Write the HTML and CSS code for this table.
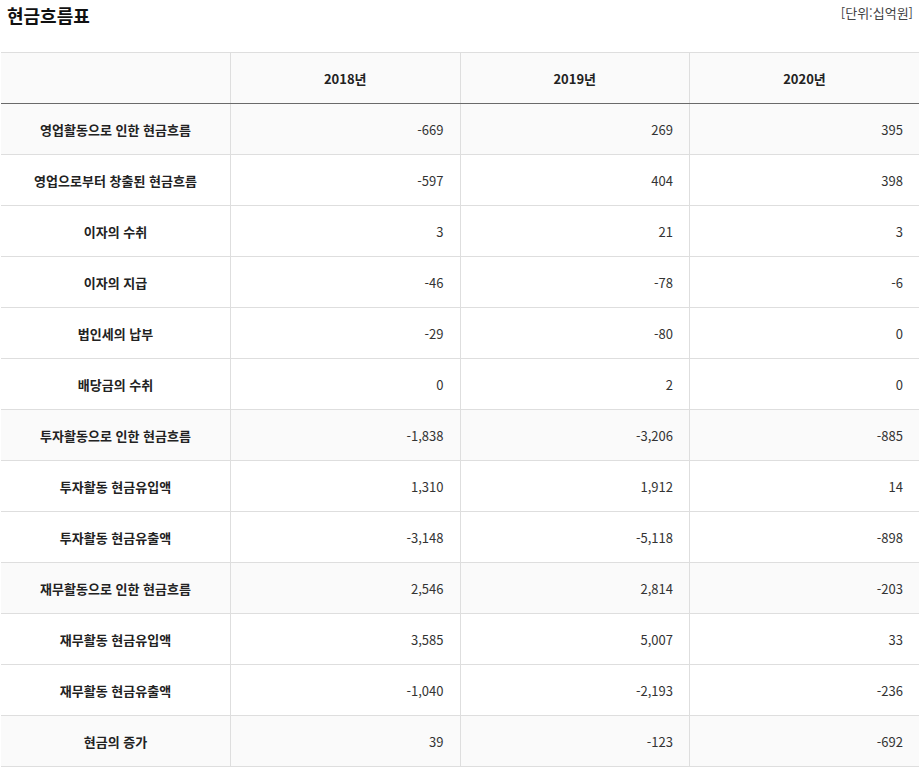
FILE: index.html
```html
<!DOCTYPE html>
<html lang="ko">
<head>
<meta charset="utf-8">
<link rel="stylesheet" href="styles.css">
</head>
<body>
<div class="page">
  <div class="head">
    <h2 class="title">현금흐름표</h2>
    <span class="unit">[단위:십억원]</span>
  </div>
  <table class="cf">
    <thead>
      <tr><th></th><th>2018년</th><th>2019년</th><th>2020년</th></tr>
    </thead>
    <tbody>
      <tr class="sub"><th>영업활동으로 인한 현금흐름</th><td>-669</td><td>269</td><td>395</td></tr>
      <tr><th>영업으로부터 창출된 현금흐름</th><td>-597</td><td>404</td><td>398</td></tr>
      <tr><th>이자의 수취</th><td>3</td><td>21</td><td>3</td></tr>
      <tr><th>이자의 지급</th><td>-46</td><td>-78</td><td>-6</td></tr>
      <tr><th>법인세의 납부</th><td>-29</td><td>-80</td><td>0</td></tr>
      <tr><th>배당금의 수취</th><td>0</td><td>2</td><td>0</td></tr>
      <tr class="sub"><th>투자활동으로 인한 현금흐름</th><td>-1,838</td><td>-3,206</td><td>-885</td></tr>
      <tr><th>투자활동 현금유입액</th><td>1,310</td><td>1,912</td><td>14</td></tr>
      <tr><th>투자활동 현금유출액</th><td>-3,148</td><td>-5,118</td><td>-898</td></tr>
      <tr class="sub"><th>재무활동으로 인한 현금흐름</th><td>2,546</td><td>2,814</td><td>-203</td></tr>
      <tr><th>재무활동 현금유입액</th><td>3,585</td><td>5,007</td><td>33</td></tr>
      <tr><th>재무활동 현금유출액</th><td>-1,040</td><td>-2,193</td><td>-236</td></tr>
      <tr class="sub"><th>현금의 증가</th><td>39</td><td>-123</td><td>-692</td></tr>
    </tbody>
  </table>
</div>
</body>
</html>
```

FILE: styles.css
```css
html, body {
  margin: 0;
  padding: 0;
  background: #fff;
}
body {
  font-family: "Noto Sans CJK KR", "Noto Sans", sans-serif;
  color: #333;
}
.page {
  width: 923px;
}
.head {
  display: flex;
  justify-content: space-between;
  align-items: flex-start;
  height: 52px;
  padding: 0 10px 0 7px;
  box-sizing: border-box;
}
.title {
  margin: 0;
  padding-top: 3px;
  font-size: 18px;
  font-weight: 700;
  line-height: 24px;
  color: #111;
}
.unit {
  padding-top: 3px;
  font-size: 13px;
  line-height: 20px;
  color: #444;
}
.cf {
  margin-left: 1px;
  width: 918px;
  border-collapse: collapse;
  table-layout: fixed;
  font-size: 13px;
}
.cf th, .cf td {
  height: 51px;
  padding: 0;
  border-top: 1px solid #dedede;
  border-bottom: 1px solid #dedede;
  border-left: 1px solid #dedede;
  box-sizing: border-box;
}
.cf tr > :first-child {
  border-left: none;
}
.cf thead th {
  background: #fafafa;
  font-weight: 700;
  color: #222;
  text-align: center;
  border-bottom: 1px solid #6a6a6a;
}
.cf tbody th {
  font-weight: 700;
  color: #222;
  text-align: center;
}
.cf tbody td {
  text-align: right;
  padding-right: 16px;
  color: #333;
}
.cf tr.sub th, .cf tr.sub td {
  background: #fafafa;
}
```
